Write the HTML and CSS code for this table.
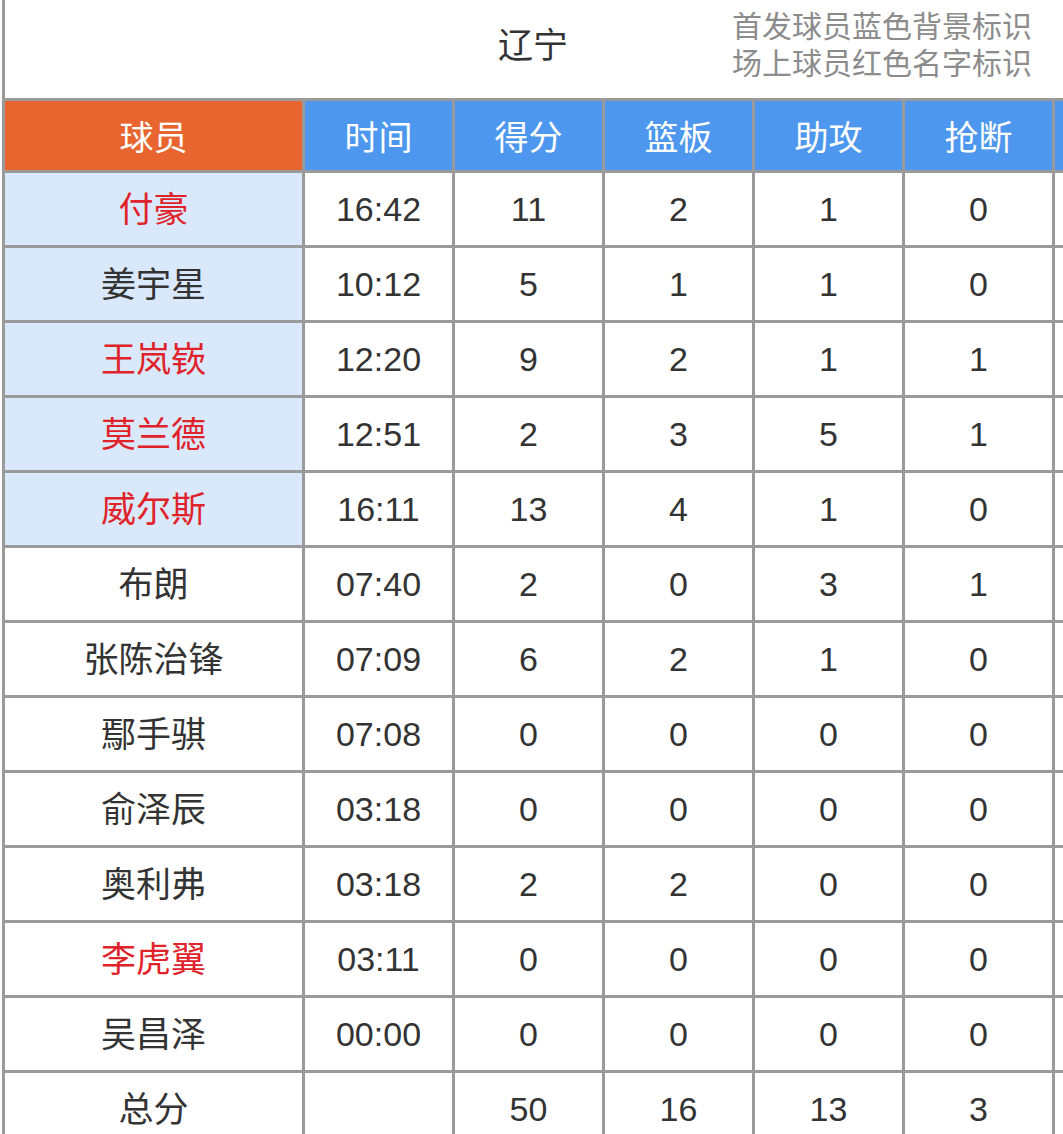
FILE: index.html
```html
<!DOCTYPE html>
<html lang="zh">
<head>
<meta charset="utf-8">
<link rel="stylesheet" href="styles.css">
</head>
<body>
<div class="page">
  <div class="top">
    <div class="title">辽宁</div>
    <div class="note">首发球员蓝色背景标识<br>场上球员红色名字标识</div>
  </div>
  <table class="stats">
    <thead>
      <tr>
        <th class="h-player">球员</th>
        <th>时间</th><th>得分</th><th>篮板</th><th>助攻</th><th>抢断</th><th></th>
      </tr>
    </thead>
    <tbody>
      <tr><td class="name starter oncourt">付豪</td><td>16:42</td><td>11</td><td>2</td><td>1</td><td>0</td><td></td></tr>
      <tr><td class="name starter">姜宇星</td><td>10:12</td><td>5</td><td>1</td><td>1</td><td>0</td><td></td></tr>
      <tr><td class="name starter oncourt">王岚嵚</td><td>12:20</td><td>9</td><td>2</td><td>1</td><td>1</td><td></td></tr>
      <tr><td class="name starter oncourt">莫兰德</td><td>12:51</td><td>2</td><td>3</td><td>5</td><td>1</td><td></td></tr>
      <tr><td class="name starter oncourt">威尔斯</td><td>16:11</td><td>13</td><td>4</td><td>1</td><td>0</td><td></td></tr>
      <tr><td class="name">布朗</td><td>07:40</td><td>2</td><td>0</td><td>3</td><td>1</td><td></td></tr>
      <tr><td class="name">张陈治锋</td><td>07:09</td><td>6</td><td>2</td><td>1</td><td>0</td><td></td></tr>
      <tr><td class="name">鄢手骐</td><td>07:08</td><td>0</td><td>0</td><td>0</td><td>0</td><td></td></tr>
      <tr><td class="name">俞泽辰</td><td>03:18</td><td>0</td><td>0</td><td>0</td><td>0</td><td></td></tr>
      <tr><td class="name">奥利弗</td><td>03:18</td><td>2</td><td>2</td><td>0</td><td>0</td><td></td></tr>
      <tr><td class="name oncourt">李虎翼</td><td>03:11</td><td>0</td><td>0</td><td>0</td><td>0</td><td></td></tr>
      <tr><td class="name">吴昌泽</td><td>00:00</td><td>0</td><td>0</td><td>0</td><td>0</td><td></td></tr>
      <tr class="total"><td class="name">总分</td><td></td><td>50</td><td>16</td><td>13</td><td>3</td><td></td></tr>
    </tbody>
  </table>
</div>
</body>
</html>
```

FILE: styles.css
```css
html, body {
  margin: 0;
  padding: 0;
  width: 1063px;
  height: 1134px;
  overflow: hidden;
  background: #ffffff;
}

.page {
  margin-left: 2px;
  font-family: "Liberation Sans", "Noto Sans CJK SC", sans-serif;
  color: #333333;
}

.top {
  box-sizing: border-box;
  width: 1061px;
  height: 98px;
  border-left: 3px solid #9a9a9a;
  display: grid;
  grid-template-columns: 1fr auto 1fr;
  align-items: start;
}

.title {
  grid-column: 2;
  margin-top: 18px;
  font-size: 35px;
  line-height: 50px;
  color: #333333;
  font-family: "Noto Sans CJK SC", sans-serif;
  padding-right: 2px;
}

.note {
  grid-column: 3;
  justify-self: end;
  margin-top: 6px;
  padding-right: 31px;
  font-size: 30px;
  line-height: 37px;
  color: #8c8c8c;
  font-family: "Noto Sans CJK SC", sans-serif;
  text-align: right;
  white-space: nowrap;
}

.stats {
  border-collapse: separate;
  border-spacing: 0;
  table-layout: fixed;
  width: 1203px;
  border-left: 3px solid #9a9a9a;
  border-top: 3px solid #9a9a9a;
}

.stats th,
.stats td {
  box-sizing: border-box;
  width: 150px;
  padding: 0;
  border-right: 3px solid #9a9a9a;
  border-bottom: 3px solid #9a9a9a;
  text-align: center;
  vertical-align: middle;
  font-size: 34px;
  font-weight: normal;
}

.stats th {
  height: 72px;
  background: #4d98ee;
  color: #ffffff;
  font-family: "Noto Sans CJK SC", sans-serif;
  line-height: 40px;
}

.stats th.h-player {
  width: 300px;
  background: #e8652f;
}

.stats td {
  height: 75px;
  color: #333333;
}

.stats td.name {
  width: 300px;
  font-size: 35px;
  line-height: 40px;
  font-family: "Noto Sans CJK SC", sans-serif;
  padding-bottom: 4px;
}

.stats td.starter {
  background: #d9e9fb;
}

.stats td.oncourt {
  color: #e0222a;
}
```
